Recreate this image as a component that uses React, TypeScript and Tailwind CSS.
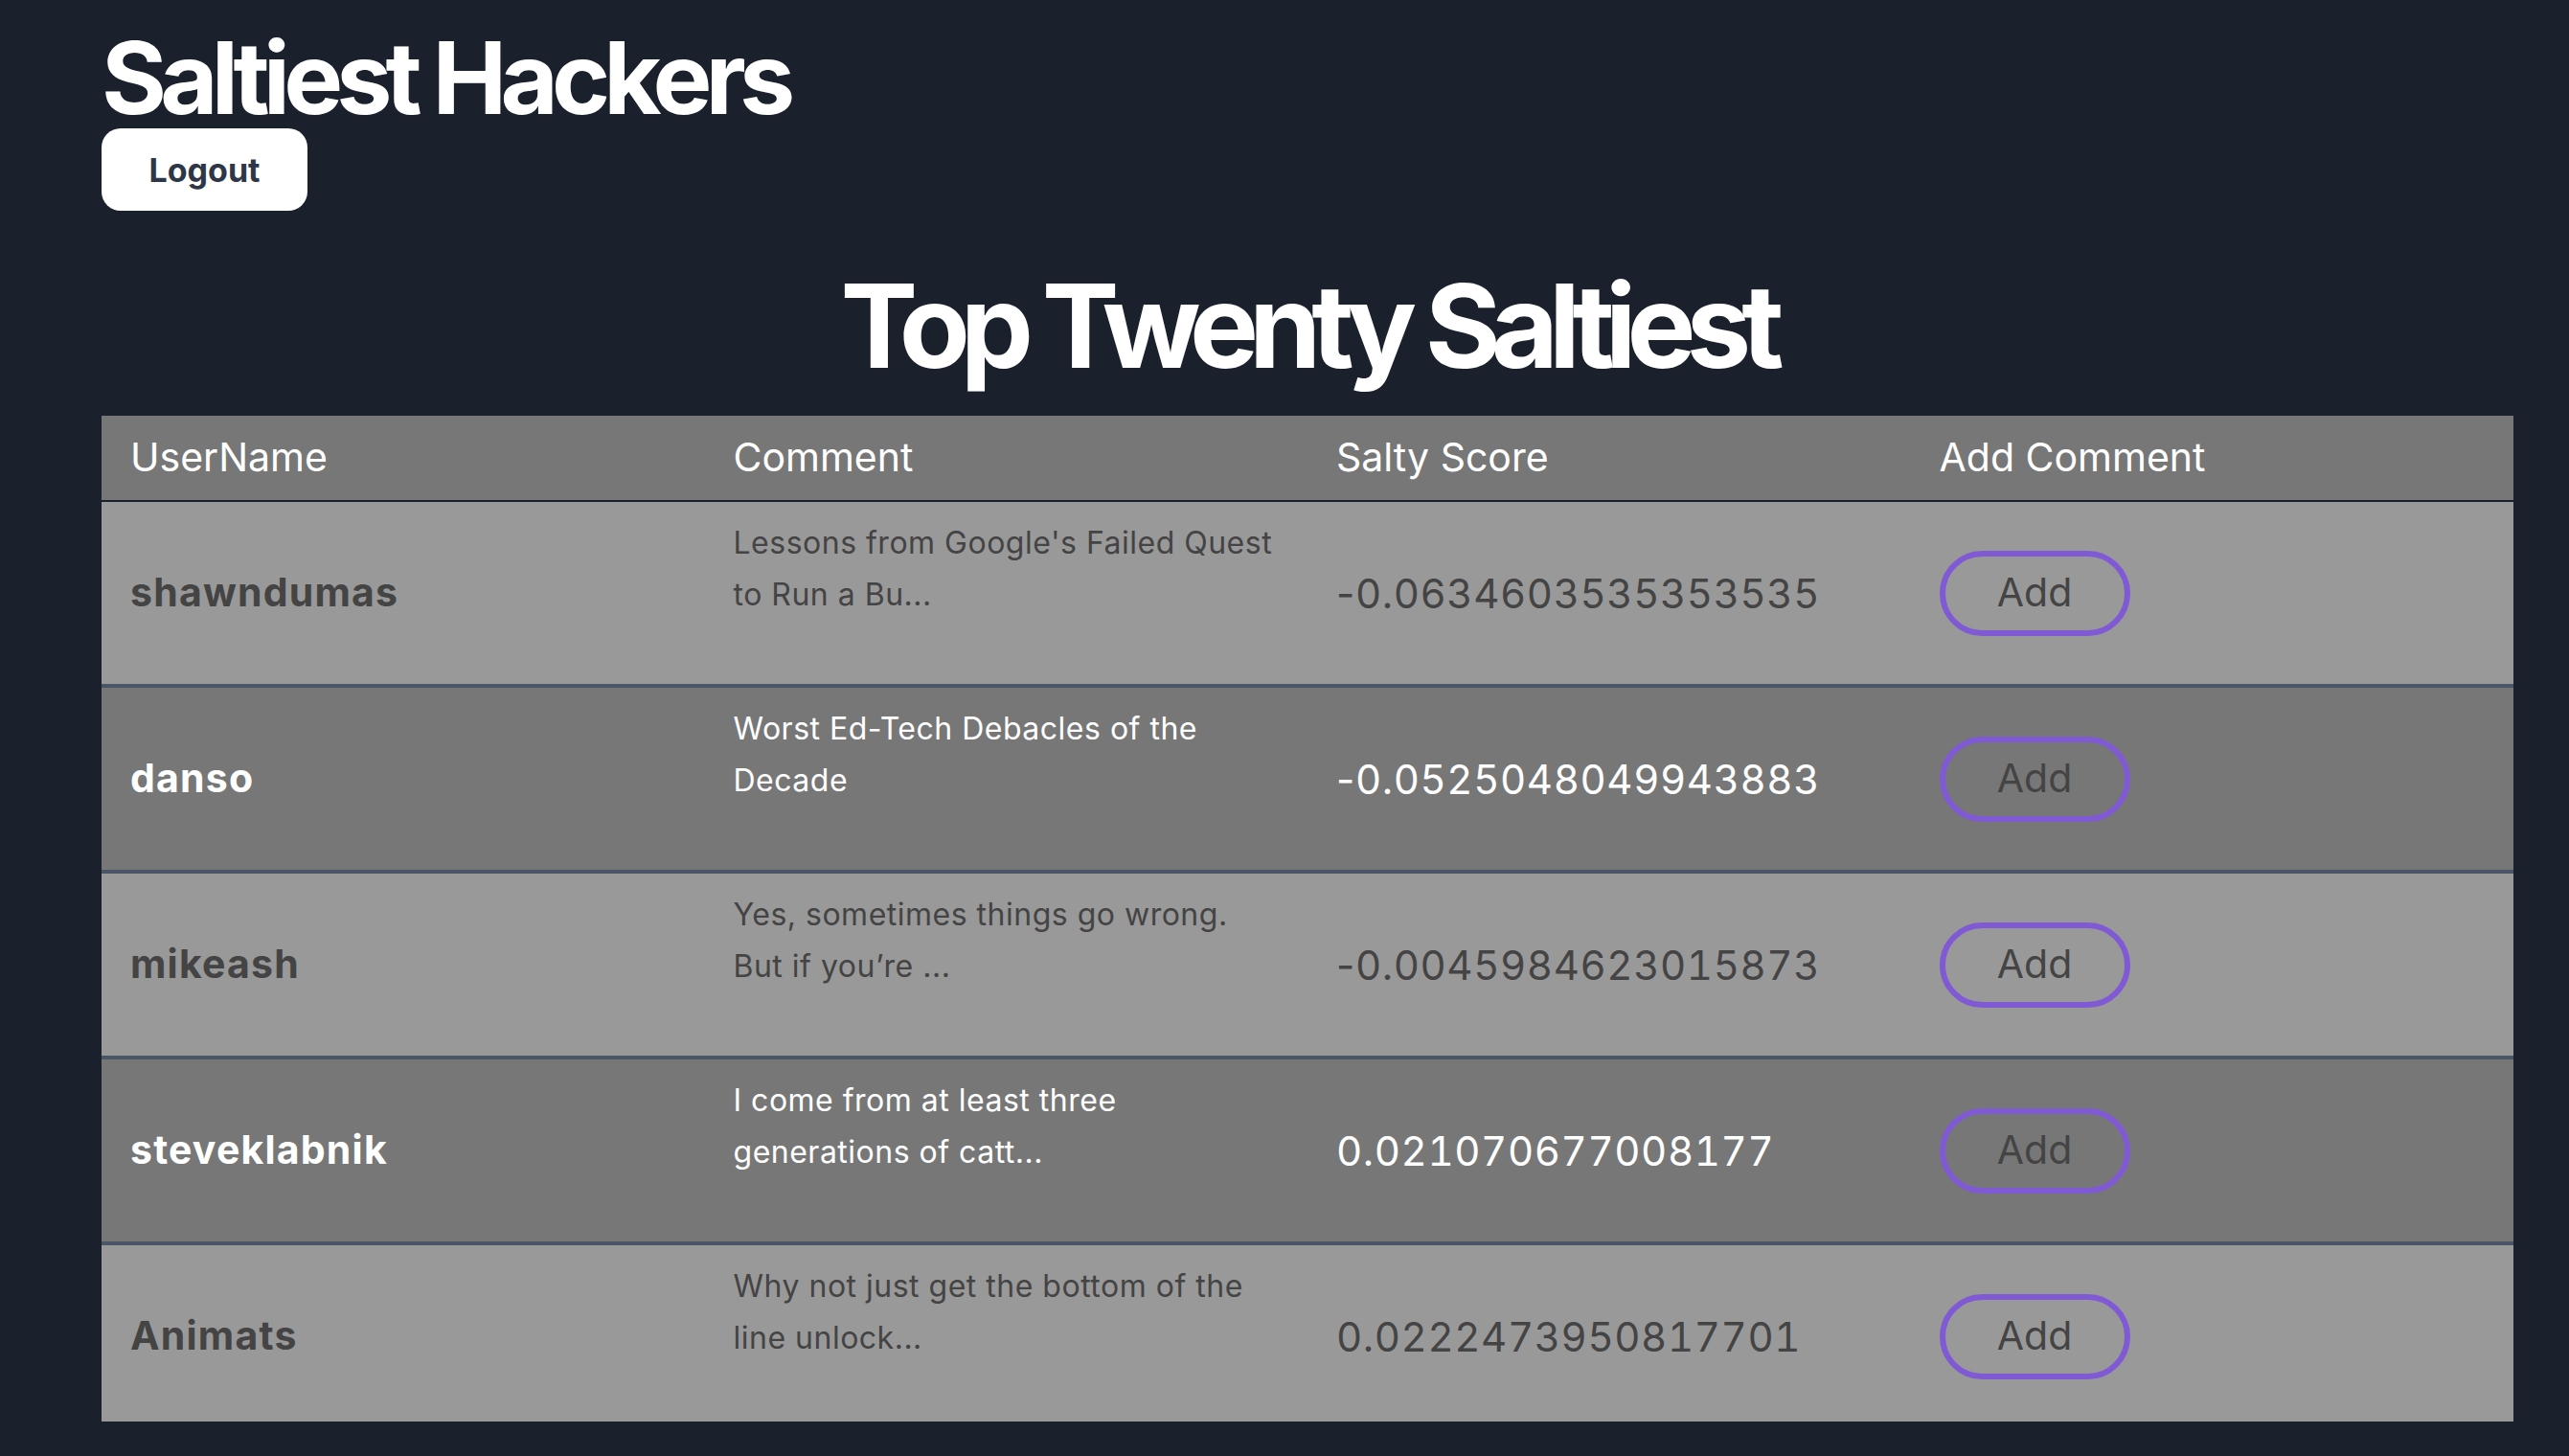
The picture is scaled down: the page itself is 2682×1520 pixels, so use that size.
import React from 'react'

type Salty = { username: string; comment: string[]; score: string }

const rows: Salty[] = [
  { username: 'shawndumas', comment: ["Lessons from Google's Failed Quest", 'to Run a Bu...'], score: '-0.0634603535353535' },
  { username: 'danso', comment: ['Worst Ed-Tech Debacles of the', 'Decade'], score: '-0.0525048049943883' },
  { username: 'mikeash', comment: ['Yes, sometimes things go wrong.', 'But if you’re ...'], score: '-0.0045984623015873' },
  { username: 'steveklabnik', comment: ['I come from at least three', 'generations of catt...'], score: '0.021070677008177' },
  { username: 'Animats', comment: ['Why not just get the bottom of the', 'line unlock...'], score: '0.0222473950817701' }
]

const font = { fontFamily: 'Inter, "Noto Sans", sans-serif' }

function Score({ value }: { value: string }) {
  const negative = value.startsWith('-')
  return (
    <>
      {negative && <span>-</span>}
      <span className="tabular-nums">{negative ? value.slice(1) : value}</span>
    </>
  )
}

function Row({ row, index }: { row: Salty; index: number }) {
  const dark = index % 2 === 1
  return (
    <div
      className={`grid grid-cols-4 h-[194px] shrink-0 border-b-4 border-[#4a5568] ${
        dark ? 'bg-[#777777] text-white' : 'bg-[#999999] text-[#444444]'
      }`}
    >
      <div className="flex items-center pl-[30px] text-[41px] font-bold tracking-[1.2px]">{row.username}</div>
      <div className="pl-[30px] pt-[16px] text-[32px] leading-[54px] tracking-[0.5px]">
        {row.comment.map((line, i) => (
          <div key={i}>{line}</div>
        ))}
      </div>
      <div className="flex items-center pl-[30px] text-[42px] tracking-[0.6px]">
        <Score value={row.score} />
      </div>
      <div className="flex items-center pl-[30px]">
        <button
          type="button"
          className="w-[199px] h-[89px] rounded-full border-[6px] border-[#805ad5] text-[41px] text-[#444444] cursor-pointer"
        >
          Add
        </button>
      </div>
    </div>
  )
}

export default function App() {
  return (
    <div className="min-h-screen bg-[#1a202c] pl-[106px] pt-[29px]" style={font}>
      <h1 className="text-[104px] leading-none font-bold text-white tracking-[-0.066em]">Saltiest Hackers</h1>
      <button
        type="button"
        className="mt-[1px] w-[215px] h-[86px] rounded-[20px] bg-white text-[34px] font-bold text-[#2d3748]"
      >
        Logout
      </button>

      <div className="w-[2518px]">
        <h2 className="mt-[60px] text-center text-[121px] leading-none font-bold text-white tracking-[-0.083em]">
          Top Twenty Saltiest
        </h2>

        <div className="mt-[33px]">
          <div className="grid grid-cols-4 h-[90px] bg-[#777777] border-b-2 border-[#1a202c] text-white text-[41px]">
            <div className="flex items-center pl-[30px]">UserName</div>
            <div className="flex items-center pl-[30px]">Comment</div>
            <div className="flex items-center pl-[30px]">Salty Score</div>
            <div className="flex items-center pl-[30px]">Add Comment</div>
          </div>
          <div className="flex flex-col h-[960px] overflow-hidden">
            {rows.map((row, i) => (
              <Row key={row.username} row={row} index={i} />
            ))}
          </div>
        </div>
      </div>
    </div>
  )
}
